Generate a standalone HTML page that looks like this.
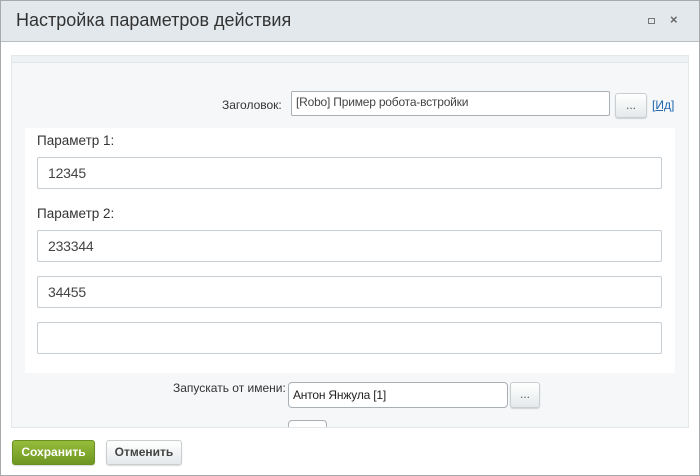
<!DOCTYPE html>
<html><head><meta charset="utf-8"><style>
*{box-sizing:border-box;margin:0;padding:0}
body{width:700px;height:476px;overflow:hidden;background:#fff;font-family:"Liberation Sans",sans-serif;position:relative}
.frame{position:absolute;left:0;top:0;width:700px;height:476px;border:1px solid #a7a9ab;}
.title{position:absolute;left:1px;top:1px;width:698px;height:41px;background:#e3e8ec;border-bottom:1px solid #b9bdc0;}
.title span{position:absolute;left:15px;top:9px;font-size:18px;color:#333}
.panel{position:absolute;left:11px;top:55px;width:678px;height:372px;background:#f5f7f8;border:1px solid #e2e7ea;border-bottom:none}
.band{position:absolute;left:12px;top:56px;width:676px;height:7px;background:#eef2f4;border-bottom:1px solid #e0e6ea}
.abs{position:absolute}
.lbl{font-size:12px;color:#333}
.inp{position:absolute;background:#fff;border:1px solid #c6cdd3;border-radius:2px;font-size:14px;color:#444;padding-left:10px;letter-spacing:-0.2px}
.btn{position:absolute;border:1px solid #c9ced1;border-radius:3px;background:linear-gradient(#fff,#e5e9eb);font-size:12px;color:#555;text-align:center;box-shadow:0 1px 1px rgba(0,0,0,.15)}
</style></head><body>
<div class="frame"></div>
<div class="title"><span>Настройка параметров действия</span>
<div class="abs" style="left:647px;top:17px;width:7px;height:6px;border:1px solid #777"></div>
<div class="abs" style="left:669px;top:11px;font-size:13px;color:#666;font-weight:bold">×</div></div>
<div class="panel"></div>
<div class="band"></div>
<div class="abs lbl" style="left:222px;top:98px">Заголовок:</div>
<div class="inp" style="left:291px;top:91px;width:319px;height:25px;font-size:12px;padding:3px 0 0 4px;border-color:#a9b0b5">[Robo] Пример робота-встройки</div>
<div class="btn" style="left:615px;top:93px;width:32px;height:25px;line-height:22px">...</div>
<div class="abs lbl" style="left:652px;top:98px;color:#2067b0">[<u>Ид</u>]</div>
<div class="abs" style="left:25px;top:128px;width:650px;height:245px;background:#fff"></div>
<div class="abs" style="left:37px;top:133px;font-size:13.5px;color:#333">Параметр 1:</div>
<div class="inp" style="left:37px;top:157px;width:625px;height:32px;line-height:30px">12345</div>
<div class="abs" style="left:37px;top:206px;font-size:13.5px;color:#333">Параметр 2:</div>
<div class="inp" style="left:37px;top:230px;width:625px;height:32px;line-height:30px">233344</div>
<div class="inp" style="left:37px;top:276px;width:625px;height:32px;line-height:30px">34455</div>
<div class="inp" style="left:37px;top:322px;width:625px;height:32px"></div>
<div class="abs lbl" style="left:173px;top:381px">Запускать от имени:</div>
<div class="inp" style="left:288px;top:382px;width:220px;height:26px;line-height:24px;font-size:12px;color:#222;padding-left:4px;border-radius:4px;border-color:#a9b0b5">Антон Янжула [1]</div>
<div class="btn" style="left:510px;top:382px;width:30px;height:26px;line-height:22px">...</div>
<div class="abs" style="left:288px;top:420px;width:39px;height:10px;border:1px solid #a9b0b5;border-bottom:none;border-radius:4px 4px 0 0;background:#fff"></div>
<div class="abs" style="left:1px;top:427px;width:698px;height:48px;background:#fff"></div>
<div class="abs" style="left:11px;top:427px;width:678px;height:1px;background:#e2e7ea"></div>
<div class="btn" style="left:12px;top:440px;width:83px;height:25px;line-height:23px;font-weight:bold;color:#fff;background:linear-gradient(#97bc3c,#6e9722);border-color:#6a8f22">Сохранить</div>
<div class="btn" style="left:106px;top:440px;width:76px;height:25px;line-height:23px;font-weight:bold;color:#444">Отменить</div>
</body></html>
